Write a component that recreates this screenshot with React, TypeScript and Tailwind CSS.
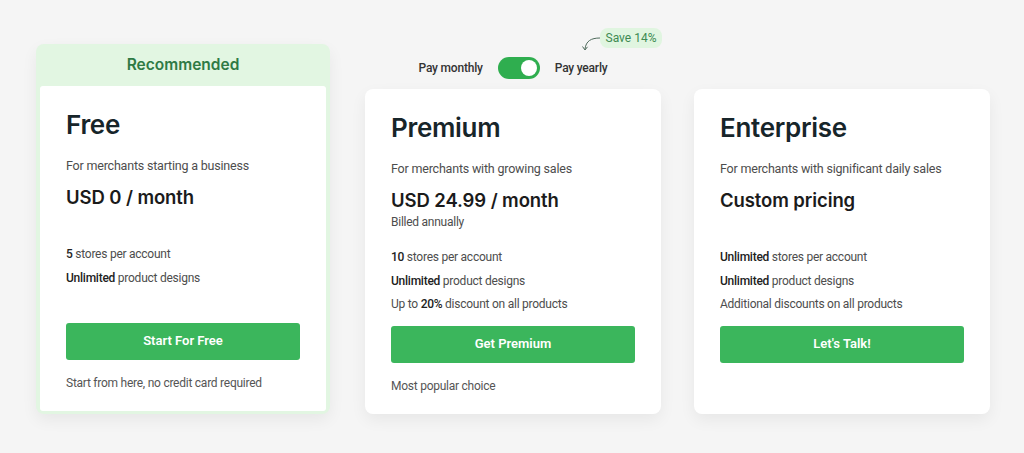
import React from "react";

const strong = "font-medium text-[#222]";

const plans = [
  {
    name: "Free",
    desc: "For merchants starting a business",
    price: "USD 0 / month",
    billed: "",
    features: [
      [<b key="b" className={strong}>5</b>, " stores per account"],
      [<b key="b" className={strong}>Unlimited</b>, " product designs"],
    ],
    cta: "Start For Free",
    note: "Start from here, no credit card required",
  },
  {
    name: "Premium",
    desc: "For merchants with growing sales",
    price: "USD 24.99 / month",
    billed: "Billed annually",
    features: [
      [<b key="b" className={strong}>10</b>, " stores per account"],
      [<b key="b" className={strong}>Unlimited</b>, " product designs"],
      ["Up to ", <b key="b" className={strong}>20%</b>, " discount on all products"],
    ],
    cta: "Get Premium",
    note: "Most popular choice",
  },
  {
    name: "Enterprise",
    desc: "For merchants with significant daily sales",
    price: "Custom pricing",
    billed: "",
    features: [
      [<b key="b" className={strong}>Unlimited</b>, " stores per account"],
      [<b key="b" className={strong}>Unlimited</b>, " product designs"],
      ["Additional discounts on all products"],
    ],
    cta: "Let's Talk!",
    note: "",
  },
];

function CardBody({ plan }: { plan: (typeof plans)[number] }) {
  return (
    <div className="pt-[23px] px-[26px] pb-[19px]">
      <h2 className="font-['Inter',sans-serif] text-[26px] leading-[32px] font-semibold text-[#17252a] tracking-[-0.3px]">
        {plan.name}
      </h2>
      <p className="mt-[16px] text-[12.5px] leading-[18px] tracking-[-0.2px] text-[#4d4d4d]">{plan.desc}</p>
      <p className="mt-[10px] font-['Inter',sans-serif] text-[18.5px] leading-[24px] font-semibold text-[#1b1b1b] tracking-[-0.1px]">
        {plan.price}
      </p>
      <p className="h-[20px] text-[12px] leading-[20px] tracking-[-0.25px] text-[#4d4d4d]">{plan.billed}</p>
      <ul className="mt-[14px] h-[70.5px] text-[12px] leading-[23.5px] tracking-[-0.25px] text-[#4d4d4d]">
        {plan.features.map((f, i) => (
          <li key={i}>{f}</li>
        ))}
      </ul>
      <button className="mt-[9px] w-full h-[37px] rounded-[3px] bg-[#3bb65c] text-white text-[13px] font-semibold">
        {plan.cta}
      </button>
      <p className="mt-[14px] h-[18px] text-[12px] leading-[18px] tracking-[-0.25px] text-[#555]">{plan.note}</p>
    </div>
  );
}

export default function App() {
  return (
    <div className="w-[1024px] h-[453px] bg-[#f5f5f5] font-['Roboto',sans-serif] overflow-hidden">
      <div className="flex items-end pl-[36px] pt-[44px]">
        {/* Free, recommended */}
        <div className="w-[294px] rounded-[8px] bg-[#e2f6e2] shadow-[0_6px_16px_rgba(0,0,0,0.06)] px-[4px] pb-[3px]">
          <div className="h-[42px] flex items-center justify-center font-['Inter',sans-serif] text-[15.5px] font-semibold text-[#2f7a45]">
            Recommended
          </div>
          <div className="bg-white rounded-[3px]">
            <CardBody plan={plans[0]} />
          </div>
        </div>

        {/* Premium with toggle */}
        <div className="ml-[35px] flex flex-col items-center">
          <div className="relative flex items-center gap-[15px] mb-[10px] text-[12px] tracking-[-0.2px] font-medium text-[#333]">
            <span>Pay monthly</span>
            <div className="w-[42px] h-[22px] rounded-full bg-[#2fae4f] flex items-center justify-end pr-[3px]">
              <div className="w-[16px] h-[16px] rounded-full bg-white" />
            </div>
            <span>Pay yearly</span>
            <div className="absolute left-[181px] top-[-29px] px-[6px] h-[20px] rounded-[8px] bg-[#e0f5e0] text-[#3d8a52] text-[12px] font-normal tracking-normal leading-[20px] whitespace-nowrap">
              Save 14%
            </div>
            <svg className="absolute left-[158px] top-[-21px]" width="26" height="18" viewBox="0 0 26 18" fill="none">
              <path d="M23 2 C14 2 9 5 8 13" stroke="#4f6b5c" strokeWidth="1" />
              <path d="M5.5 10.5 L8 14 L10.5 10.8" stroke="#4f6b5c" strokeWidth="1" />
            </svg>
          </div>
          <div className="w-[296px] bg-white rounded-[8px] shadow-[0_6px_16px_rgba(0,0,0,0.06)]">
            <CardBody plan={plans[1]} />
          </div>
        </div>

        {/* Enterprise */}
        <div className="ml-[33px] w-[296px] bg-white rounded-[8px] shadow-[0_6px_16px_rgba(0,0,0,0.06)]">
          <CardBody plan={plans[2]} />
        </div>
      </div>
    </div>
  );
}
